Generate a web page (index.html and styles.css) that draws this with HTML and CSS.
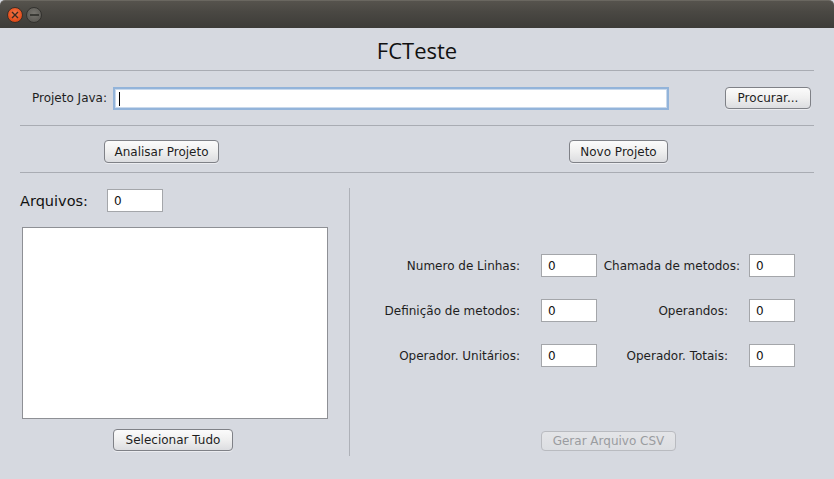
FILE: index.html
```html
<!DOCTYPE html>
<html>
<head>
<meta charset="utf-8">
<link rel="stylesheet" href="styles.css">
</head>
<body>
<div class="titlebar">
  <span class="wbtn close"><svg width="8" height="8" viewBox="0 0 8 8"><path d="M1 1L7 7M7 1L1 7" stroke="#3a2a20" stroke-width="1.4"/></svg></span>
  <span class="wbtn mini"><svg width="9" height="2" viewBox="0 0 9 2"><path d="M0 1H9" stroke="#2e2d2a" stroke-width="1.6"/></svg></span>
</div>
<div class="window">
  <div class="header">FCTeste</div>
  <div class="sep"></div>
  <div class="row1">
    <span class="lbl">Projeto Java:</span>
    <span class="path-input"><span class="caret"></span></span>
    <button class="btn btn-procurar">Procurar...</button>
  </div>
  <div class="sep"></div>
  <div class="row2">
    <button class="btn btn-analisar">Analisar Projeto</button>
    <button class="btn btn-novo">Novo Projeto</button>
  </div>
  <div class="sep"></div>
  <div class="main">
    <div class="left">
      <div class="arq-row">
        <span class="arq-lbl">Arquivos:</span>
        <span class="field arq-field">0</span>
      </div>
      <div class="list"></div>
      <button class="btn btn-sel">Selecionar Tudo</button>
    </div>
    <div class="vsep"></div>
    <div class="right">
      <div class="form">
        <span class="flbl l1">Numero de Linhas:</span><span class="field f1">0</span>
        <span class="flbl l2">Chamada de metodos:</span><span class="field f2">0</span>
        <span class="flbl l1">Definição de metodos:</span><span class="field f1">0</span>
        <span class="flbl l2 inset">Operandos:</span><span class="field f2">0</span>
        <span class="flbl l1">Operador. Unitários:</span><span class="field f1">0</span>
        <span class="flbl l2 inset">Operador. Totais:</span><span class="field f2">0</span>
      </div>
      <button class="btn btn-csv" disabled>Gerar Arquivo CSV</button>
    </div>
  </div>
</div>
</body>
</html>
```
FILE: styles.css
```css
* { box-sizing: border-box; }
html, body { margin: 0; padding: 0; }
body {
  width: 834px;
  height: 479px;
  overflow: hidden;
  font-family: "DejaVu Sans", sans-serif;
  font-size: 12px;
  color: #1e1e1e;
  background: #d6d9e0;
}
.titlebar {
  height: 28px;
  background: linear-gradient(#56534d 0%, #4a4843 40%, #3d3c38 100%);
  border-top: 1px solid #6a6760;
  border-radius: 5px 5px 0 0;
  display: flex;
  align-items: center;
  padding-left: 7px;
  gap: 3px;
}
.wbtn {
  width: 16px;
  height: 16px;
  border-radius: 50%;
  display: flex;
  align-items: center;
  justify-content: center;
}
.close {
  background: radial-gradient(circle at 50% 40%, #f57a4d 0%, #e4511f 60%, #c43f12 100%);
  border: 1px solid #3a2f28;
}
.mini {
  background: radial-gradient(circle at 50% 40%, #77756f 0%, #5e5c57 70%, #4d4b47 100%);
  border: 1px solid #33322f;
}
.window {
  height: 451px;
  background: #d6d9e0;
}
.header {
  height: 42px;
  display: flex;
  justify-content: center;
  align-items: center;
  padding-top: 1px;
  font-size: 22px;
  color: #111;
  font-family: "Open Sans", "DejaVu Sans", sans-serif;
}
.sep {
  height: 1px;
  margin: 0 20px;
  background: #a9acb3;
}
.row1 {
  height: 54px;
  display: flex;
  align-items: center;
  padding-left: 32px;
}
.lbl { width: 81px; white-space: nowrap; }
.path-input {
  width: 556px;
  height: 23px;
  background: #fff;
  border: 2px solid #93b4da;
  box-shadow: inset 0 0 0 1px #c9d9ec;
  display: flex;
  align-items: center;
  padding-left: 4px;
  margin-top: 1px;
}
.caret { width: 1px; height: 14px; background: #000; }
.btn {
  font-family: "DejaVu Sans", sans-serif;
  font-size: 12px;
  color: #1e1e1e;
  height: 23px;
  padding: 0;
  white-space: nowrap;
  border: 1px solid #7f8187;
  border-radius: 4px;
  background: linear-gradient(#fbfbfb 0%, #efefef 50%, #dcdde0 100%);
  box-shadow: 0 1px 0 rgba(255,255,255,0.5);
}
.btn-procurar { width: 86px; height: 22px; margin-left: 56px; }
.row2 {
  height: 46px;
  display: flex;
  align-items: flex-start;
  padding-top: 14px;
  padding-left: 104px;
}
.btn-analisar { width: 115px; }
.btn-novo { width: 99px; margin-left: 350px; }
.main { display: flex; height: 278px; }
.left {
  width: 349px;
  padding-top: 16px;
  padding-left: 20px;
  display: flex;
  flex-direction: column;
  align-items: flex-start;
}
.arq-row { display: flex; align-items: center; height: 23px; }
.arq-lbl { font-size: 14.5px; width: 87px; color: #111; }
.field {
  height: 23px;
  background: #fff;
  border: 1px solid #a4a6aa;
  display: flex;
  align-items: center;
  padding-left: 6px;
  font-size: 12px;
  color: #111;
}
.arq-field { width: 56px; height: 23px; }
.list {
  margin-top: 15px;
  margin-left: 2px;
  width: 306px;
  height: 197px;
  background: #fff;
  border: 1px solid #8e9095;
}
.btn-sel { margin-top: 10px; margin-left: 93px; width: 120px; }
.vsep {
  width: 1px;
  height: 268px;
  margin-top: 15px;
  background: #aeb1b8;
}
.right {
  flex: 1;
  padding-top: 81px;
  display: flex;
  flex-direction: column;
  align-items: flex-start;
}
.form {
  margin-left: 20px;
  display: grid;
  grid-template-columns: 171px 56px 152px 46px;
  row-gap: 22px;
  align-items: center;
}
.flbl { text-align: right; white-space: nowrap; color: #1e1e1e; }
.l1 { padding-right: 21px; }
.l2 { padding-right: 9px; }
.l2.inset { padding-right: 21px; }
.f1 { width: 56px; }
.f2 { width: 46px; }
.btn-csv {
  margin-top: 64px;
  margin-left: 191px;
  width: 135px;
  color: #9a9ca0;
  border-color: #b9bbc0;
  background: linear-gradient(#e4e5e8, #dcdee2);
  box-shadow: none;
}
```
